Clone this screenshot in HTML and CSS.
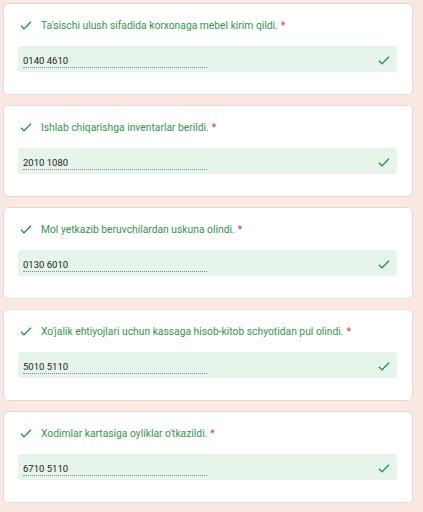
FILE: index.html
```html
<!DOCTYPE html>
<html>
<head>
<meta charset="utf-8">
<link rel="stylesheet" href="styles.css">
</head>
<body>
<div class="list">
  <div class="card">
    <div class="title-row">
      <svg class="ok" viewBox="3 5 18.5 14.5"><path d="M9 16.17L4.83 12l-1.42 1.41L9 19 21 7l-1.41-1.41z"/></svg>
      <span class="title">Ta'sischi ulush sifadida korxonaga mebel kirim qildi.</span><span class="req">*</span>
    </div>
    <div class="answer">
      <span class="field">0140 4610</span>
      <svg class="ok ok-right" viewBox="3 5 18.5 14.5"><path d="M9 16.17L4.83 12l-1.42 1.41L9 19 21 7l-1.41-1.41z"/></svg>
    </div>
  </div>
  <div class="card">
    <div class="title-row">
      <svg class="ok" viewBox="3 5 18.5 14.5"><path d="M9 16.17L4.83 12l-1.42 1.41L9 19 21 7l-1.41-1.41z"/></svg>
      <span class="title">Ishlab chiqarishga inventarlar berildi.</span><span class="req">*</span>
    </div>
    <div class="answer">
      <span class="field">2010 1080</span>
      <svg class="ok ok-right" viewBox="3 5 18.5 14.5"><path d="M9 16.17L4.83 12l-1.42 1.41L9 19 21 7l-1.41-1.41z"/></svg>
    </div>
  </div>
  <div class="card">
    <div class="title-row">
      <svg class="ok" viewBox="3 5 18.5 14.5"><path d="M9 16.17L4.83 12l-1.42 1.41L9 19 21 7l-1.41-1.41z"/></svg>
      <span class="title">Mol yetkazib beruvchilardan uskuna olindi.</span><span class="req">*</span>
    </div>
    <div class="answer">
      <span class="field">0130 6010</span>
      <svg class="ok ok-right" viewBox="3 5 18.5 14.5"><path d="M9 16.17L4.83 12l-1.42 1.41L9 19 21 7l-1.41-1.41z"/></svg>
    </div>
  </div>
  <div class="card">
    <div class="title-row">
      <svg class="ok" viewBox="3 5 18.5 14.5"><path d="M9 16.17L4.83 12l-1.42 1.41L9 19 21 7l-1.41-1.41z"/></svg>
      <span class="title">Xo'jalik ehtiyojlari uchun kassaga hisob-kitob schyotidan pul olindi.</span><span class="req">*</span>
    </div>
    <div class="answer">
      <span class="field">5010 5110</span>
      <svg class="ok ok-right" viewBox="3 5 18.5 14.5"><path d="M9 16.17L4.83 12l-1.42 1.41L9 19 21 7l-1.41-1.41z"/></svg>
    </div>
  </div>
  <div class="card">
    <div class="title-row">
      <svg class="ok" viewBox="3 5 18.5 14.5"><path d="M9 16.17L4.83 12l-1.42 1.41L9 19 21 7l-1.41-1.41z"/></svg>
      <span class="title">Xodimlar kartasiga oyliklar o'tkazildi.</span><span class="req">*</span>
    </div>
    <div class="answer">
      <span class="field">6710 5110</span>
      <svg class="ok ok-right" viewBox="3 5 18.5 14.5"><path d="M9 16.17L4.83 12l-1.42 1.41L9 19 21 7l-1.41-1.41z"/></svg>
    </div>
  </div>
</div>
</body>
</html>
```
FILE: styles.css
```css
html, body {
  margin: 0;
  padding: 0;
  background: #fce8e3;
  font-family: Roboto, "Liberation Sans", sans-serif;
}
.list {
  padding: 3px 0 0 3px;
  display: flex;
  flex-direction: column;
  gap: 10px;
}
.card {
  box-sizing: border-box;
  width: 410px;
  height: 92px;
  background: #fff;
  border: 1px solid #dfdcdb;
  border-radius: 5px;
  padding: 13px 15px 0 14px;
}
.title-row {
  display: flex;
  align-items: center;
  height: 16px;
  padding-left: 2px;
}
.ok {
  width: 12px;
  height: 9px;
  fill: #1e8e3e;
  flex: none;
}
.title {
  margin-left: 9px;
  font-size: 10.3px;
  color: #35944d;
  white-space: nowrap;
}
.req {
  margin-left: 3px;
  font-size: 10.3px;
  color: #d93025;
}
.answer {
  margin-top: 13px;
  height: 26px;
  background: #e6f4ea;
  border-radius: 3px;
  display: flex;
  align-items: center;
  padding: 0 7px 0 5px;
}
.field {
  width: 184px;
  font-size: 9.5px;
  color: #1a1b1e;
  line-height: 13px;
  padding-top: 4px;
  border-bottom: 1px dotted #80868b;
}
.ok-right {
  margin-left: auto;
  margin-top: 3px;
}
```
